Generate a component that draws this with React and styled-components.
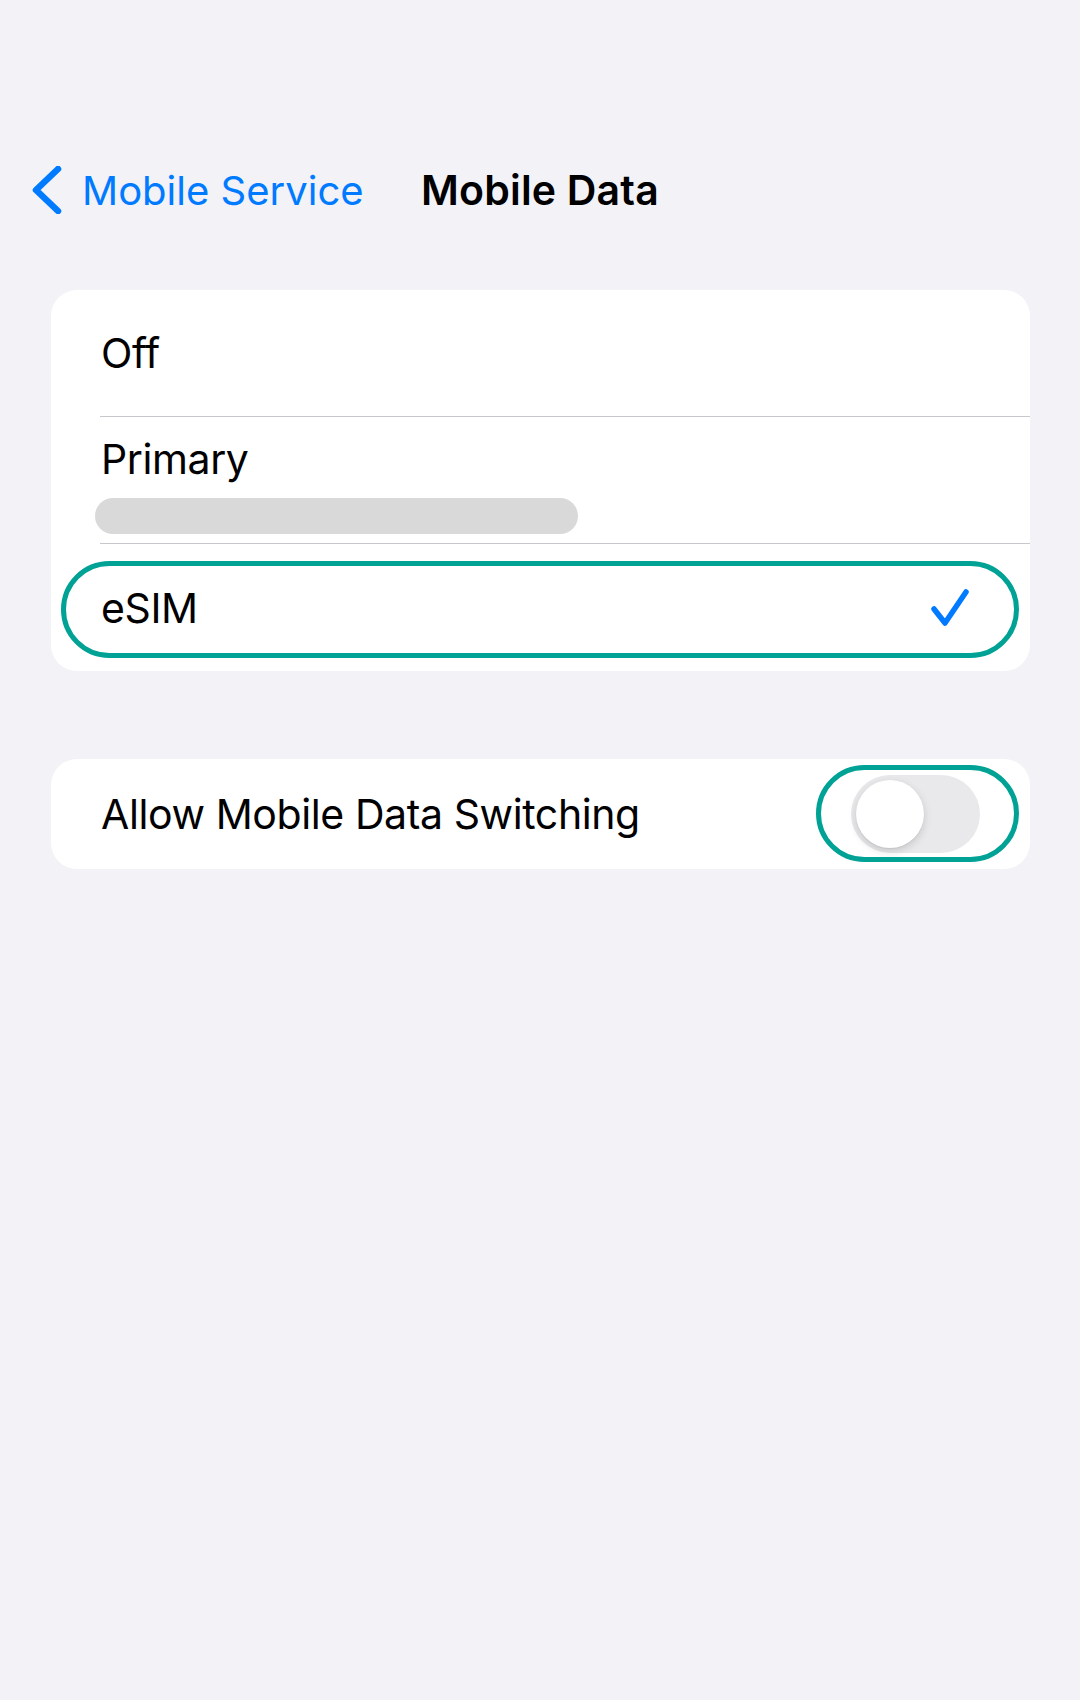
import React from "react";
import styled, { createGlobalStyle } from "styled-components";

const GlobalStyle = createGlobalStyle`
  html, body {
    margin: 0;
    background: #f2f2f7;
  }
  body {
    font-family: Inter, "Noto Sans", sans-serif;
    color: #000;
    -webkit-font-smoothing: antialiased;
  }
`;

const BLUE = "#007aff";
const TEAL = "#00a295";

const Screen = styled.div`
  min-height: 1700px;
  box-sizing: border-box;
  padding-top: 150px;
`;

const NavBar = styled.div`
  display: grid;
  grid-template-columns: 1fr auto 1fr;
  align-items: center;
  height: 80px;
`;

const BackButton = styled.a`
  display: flex;
  align-items: center;
  gap: 20px;
  padding-left: 32px;
  color: ${BLUE};
  font-size: 40px;
  text-decoration: none;
  white-space: nowrap;
`;

const Title = styled.h1`
  margin: 0;
  font-size: 41px;
  font-weight: 600;
  letter-spacing: 0.2px;
`;

const Groups = styled.div`
  display: flex;
  flex-direction: column;
  gap: 88px;
  padding: 60px 50px 0 51px;
`;

const Card = styled.div`
  background: #fff;
  border-radius: 26px;
  overflow: hidden;
`;

const Row = styled.div`
  position: relative;
  display: flex;
  align-items: center;
  justify-content: space-between;
  min-height: ${p => p.$height || 126}px;
  padding: 0 50px 0 50px;
  font-size: 41px;
  letter-spacing: -0.4px;
  & + & {
    border-top: 1.5px solid #c8c8cc;
    margin-left: 49px;
    padding-left: 1px;
  }
`;

const StackRow = styled(Row)`
  flex-direction: column;
  align-items: flex-start;
  justify-content: flex-start;
  padding-top: 17px;
  padding-bottom: 9px;
  box-sizing: border-box;
`;

const Label = styled.span`
  line-height: 50px;
`;

const Redacted = styled.div`
  width: 483px;
  height: 36px;
  margin: 14px 0 0 -6px;
  border-radius: 18px;
  background: #d9d9d9;
`;

// teal outline drawn over a row or a control
const Highlight = styled.div`
  position: absolute;
  top: ${p => p.$top}px;
  bottom: ${p => p.$bottom}px;
  left: ${p => p.$left}px;
  right: ${p => p.$right}px;
  border: 5px solid ${TEAL};
  border-radius: 60px;
  pointer-events: none;
`;

const SwitchWrap = styled.div`
  position: relative;
`;

const Track = styled.div`
  width: 129px;
  height: 78px;
  border-radius: 39px;
  background: #e9e9eb;
  padding: 5px;
  box-sizing: border-box;
`;

const Knob = styled.div`
  width: 68px;
  height: 68px;
  border-radius: 50%;
  background: #fff;
  box-shadow: 0 3px 8px rgba(0, 0, 0, 0.15), 0 1px 1px rgba(0, 0, 0, 0.06);
`;

const CheckMark = styled.svg`
  margin-right: 10px;
`;

const Chevron = () => (
  <svg width="30" height="48" viewBox="0 0 30 48">
    <path d="M26 3 L4 24 L26 45" fill="none" stroke={BLUE} strokeWidth="6.5" strokeLinecap="round" strokeLinejoin="round" />
  </svg>
);

const Check = () => (
  <CheckMark width="40" height="40" viewBox="0 0 40 40">
    <path d="M4 21 L15 35 L36 4" fill="none" stroke={BLUE} strokeWidth="5.5" strokeLinecap="round" strokeLinejoin="round" />
  </CheckMark>
);

export default function App() {
  return (
    <>
      <GlobalStyle />
      <Screen>
        <NavBar>
          <BackButton href="#">
            <Chevron />
            Mobile Service
          </BackButton>
          <Title>Mobile Data</Title>
          <span />
        </NavBar>
        <Groups>
          <Card>
            <Row>
              <Label>Off</Label>
            </Row>
            <StackRow $height={127}>
              <Label>Primary</Label>
              <Redacted />
            </StackRow>
            <Row $height={127}>
              <Label>eSIM</Label>
              <Check />
              <Highlight $top={17} $bottom={13} $left={-39} $right={11} />
            </Row>
          </Card>
          <Card>
            <Row $height={110}>
              <Label>Allow Mobile Data Switching</Label>
              <SwitchWrap>
                <Track>
                  <Knob />
                </Track>
                <Highlight $top={-10} $bottom={-9} $left={-35} $right={-39} />
              </SwitchWrap>
            </Row>
          </Card>
        </Groups>
      </Screen>
    </>
  );
}
